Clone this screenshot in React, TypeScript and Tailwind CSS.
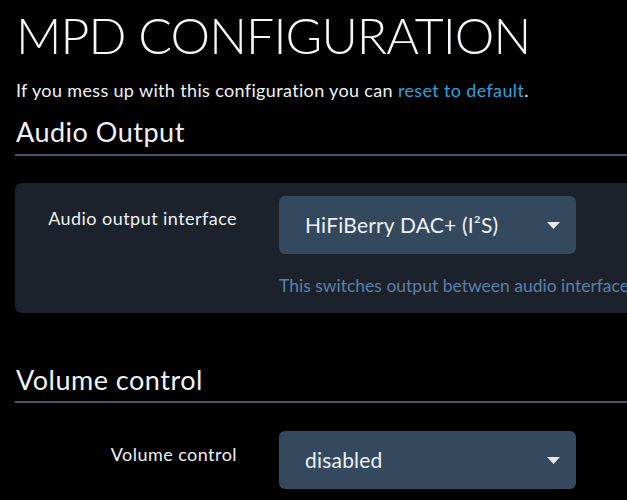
import React from "react";

function Caret() {
  return (
    <svg width="13" height="7" viewBox="0 0 13 7" className="shrink-0">
      <path d="M0 0 L13 0 L6.5 7 Z" fill="#e5e9ee" />
    </svg>
  );
}

function Select({ value }: { value: string }) {
  return (
    <div className="flex h-[58px] w-[297px] shrink-0 items-center justify-between rounded-[6px] bg-[#34495e] pl-[26px] pr-[16px] text-[21px] tracking-[0.2px] text-[#eef1f4]">
      <span>{value}</span>
      <Caret />
    </div>
  );
}

export default function App() {
  return (
    <div
      className="h-[500px] w-[627px] overflow-hidden bg-black text-white"
      style={{ fontFamily: "Lato, 'Noto Sans', sans-serif" }}
    >
      <div className="pl-[15px]">
        <h1 className="pl-[1px] pt-[5px] text-[50px] font-light leading-[60px] tracking-[-0.9px] text-[#f4f6f8]">
          MPD CONFIGURATION
        </h1>
        <p className="mt-[13px] pl-[1px] text-[18px] leading-[24px] tracking-[0.35px] text-[#f0f2f5]">
          If you mess up with this configuration you can{" "}
          <span className="text-[#2ea3e0]">reset to default</span>.
        </p>
        <h2 className="mt-[13px] pl-[1px] text-[27px] leading-[34px] tracking-[0.5px] text-[#f0f2f5]">Audio Output</h2>
        <div className="mt-[5px] h-[2px] bg-[#46566a]" />
        <div className="mt-[27px] flex h-[130px] rounded-l-[7px] bg-[#1b222b] pt-[13px]">
          <div className="w-[222px] shrink-0 pt-[10px] text-right text-[18px] leading-[24px] tracking-[0.45px] text-[#eef1f4]">
            Audio output interface
          </div>
          <div className="ml-[42px] flex shrink-0 flex-col">
            <Select value="HiFiBerry DAC+ (I²S)" />
            <div className="mt-[20px] whitespace-nowrap text-[17.5px] leading-[24px] text-[#5b80a8]">
              This switches output between audio interfaces
            </div>
          </div>
        </div>
        <h2 className="mt-[50px] pl-[1px] text-[27px] leading-[34px] tracking-[0.5px] text-[#f0f2f5]">Volume control</h2>
        <div className="mt-[4px] h-[2px] bg-[#46566a]" />
        <div className="mt-[28px] flex">
          <div className="w-[222px] shrink-0 pt-[11px] text-right text-[18px] leading-[24px] tracking-[0.45px] text-[#eef1f4]">
            Volume control
          </div>
          <div className="ml-[42px] shrink-0">
            <Select value="disabled" />
          </div>
        </div>
      </div>
    </div>
  );
}
